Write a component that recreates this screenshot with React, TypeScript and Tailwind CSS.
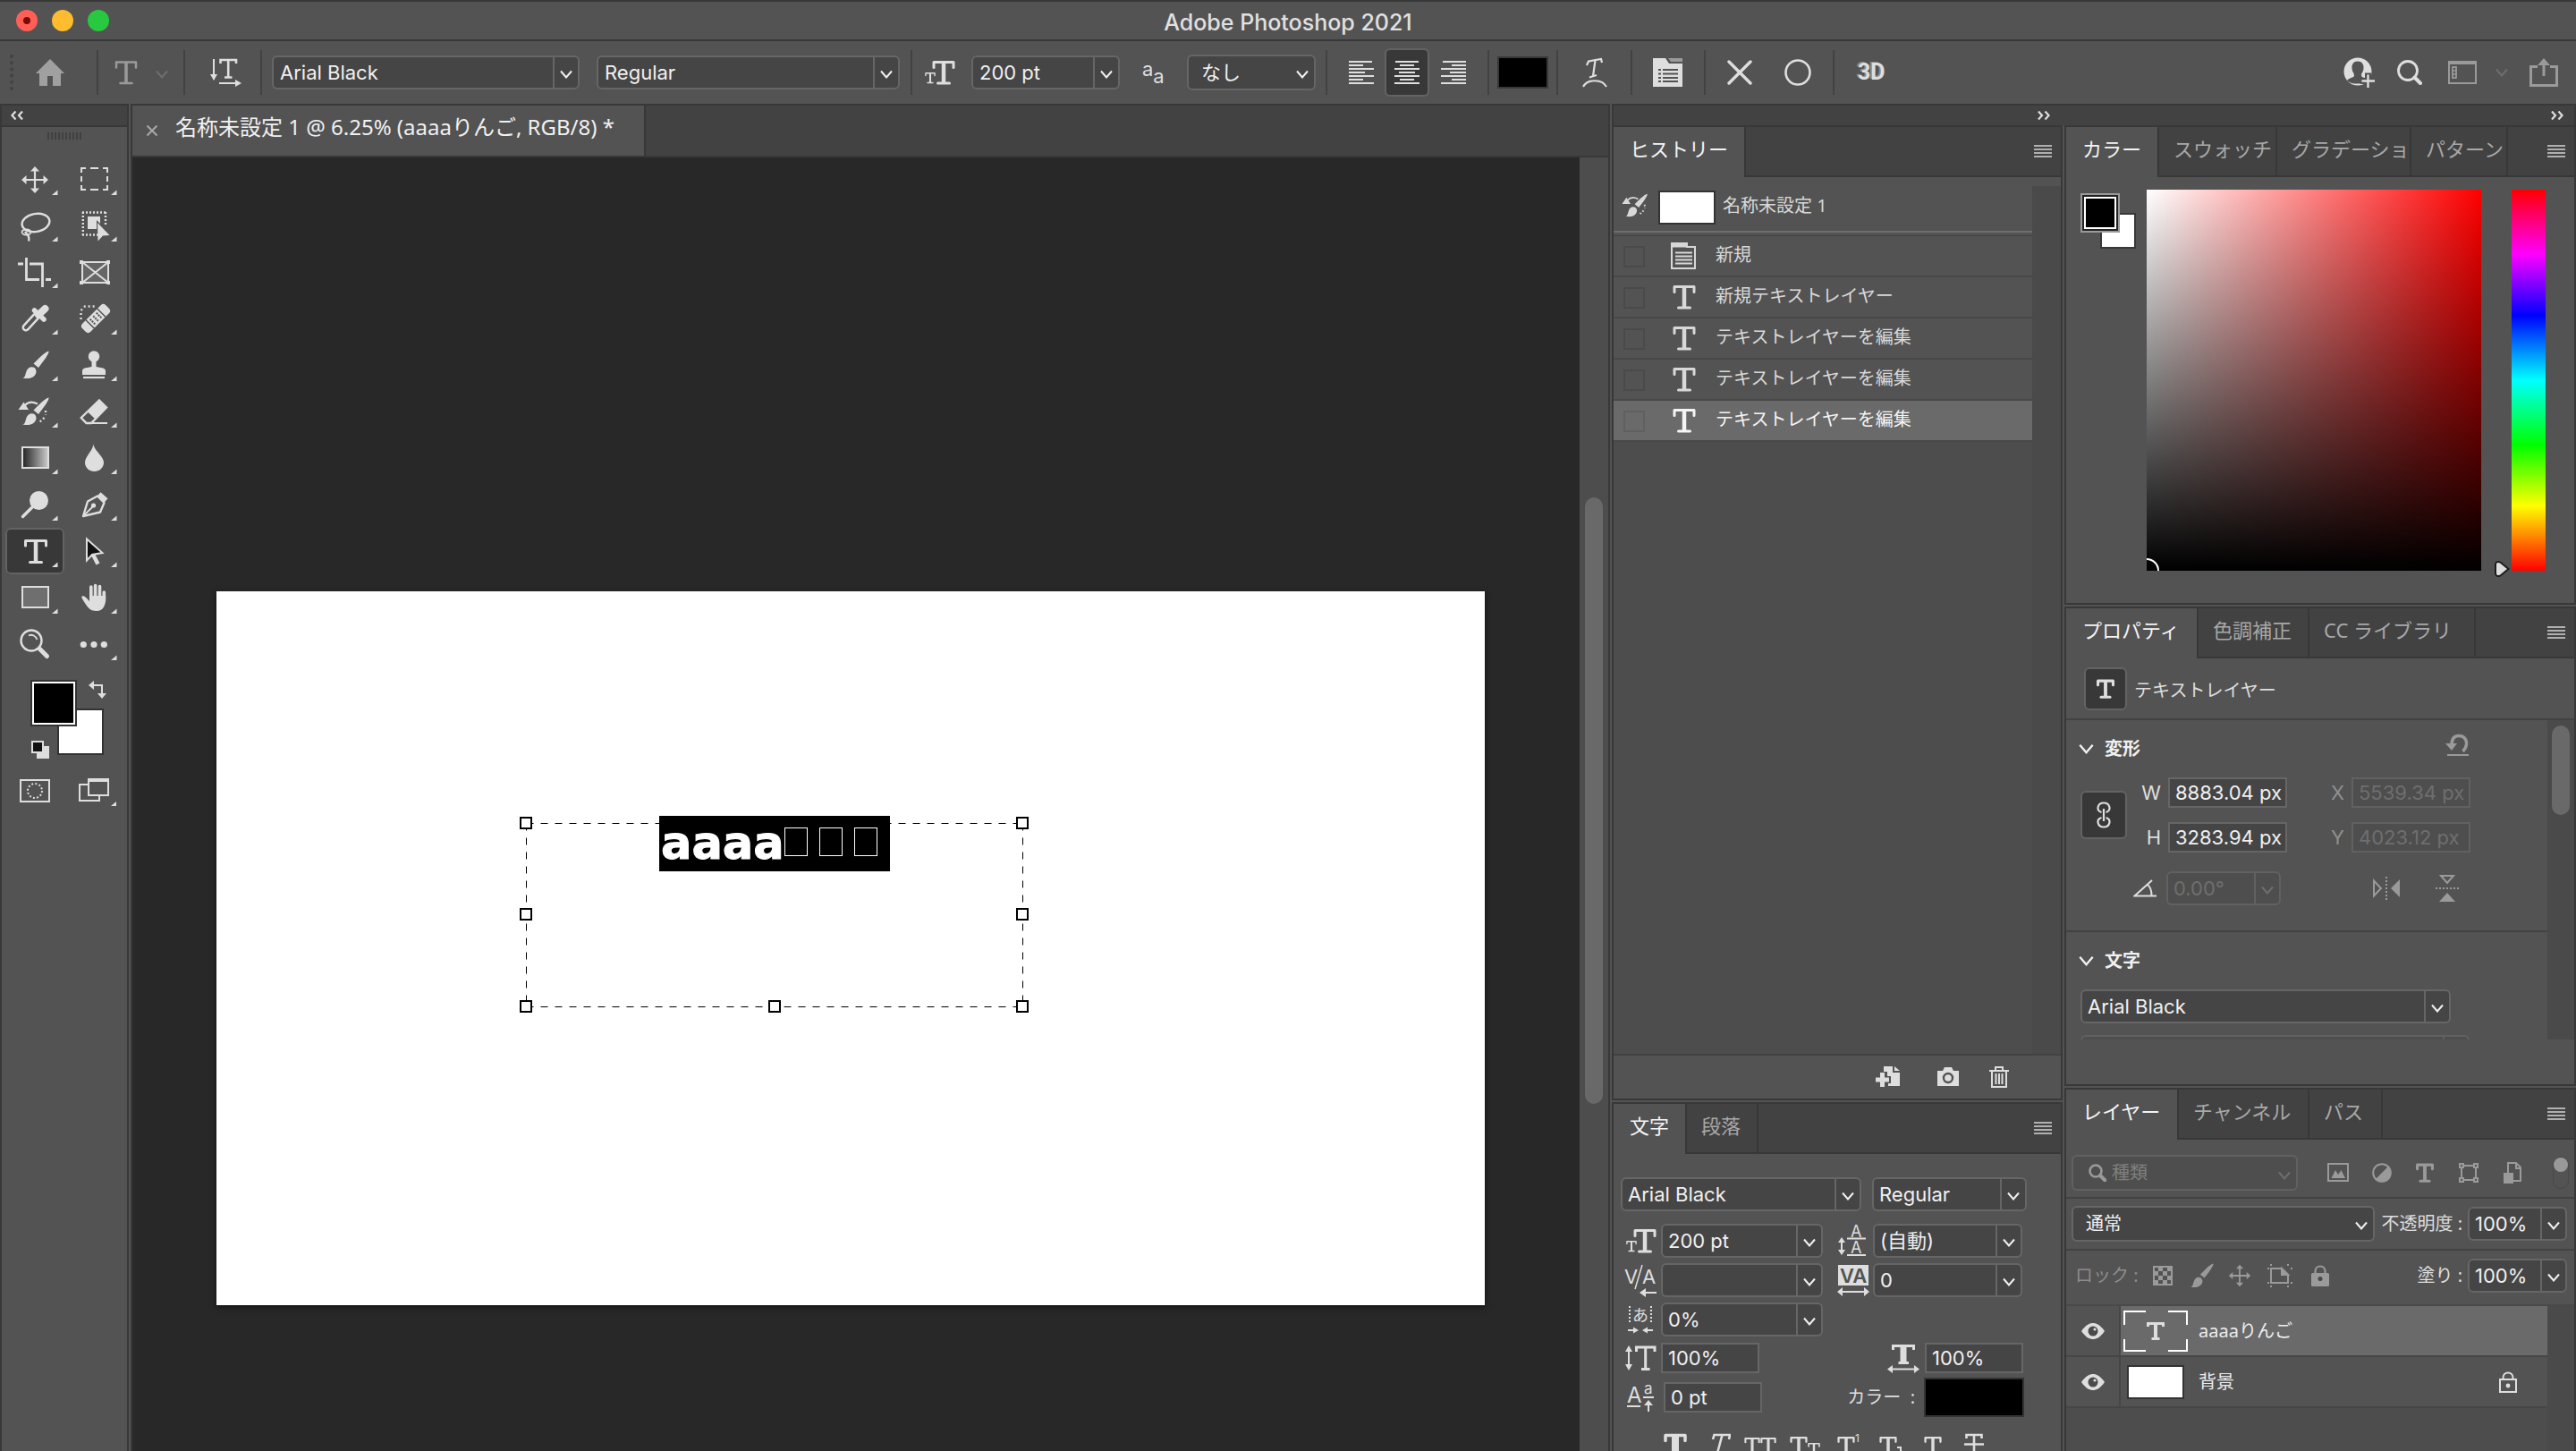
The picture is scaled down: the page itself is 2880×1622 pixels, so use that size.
import React from "react";

const UI = "font-['Inter','Noto_Sans_CJK_JP',sans-serif]";
const JP = "font-['Noto_Sans','Noto_Sans_CJK_JP',sans-serif]";

/* ---------- shared controls ---------- */

function Chevron({ className = "", size = "h-[10px] w-[14px]" }: { className?: string; size?: string }) {
  return (
    <svg viewBox="0 0 14 10" className={`shrink-0 ${size} ${className}`} fill="none" stroke="currentColor" strokeWidth="2">
      <path d="M1 1.500 7 8.500 13 1.500" />
    </svg>
  );
}

type ComboProps = { label: string; value: string; className?: string; split?: boolean; disabled?: boolean; pad?: string };

function Combo({ label, value, className = "", split = true, disabled = false, pad = "pl-[7px]" }: ComboProps) {
  const tone = disabled ? "border-[#616161] bg-[#4e4e4e] text-[#6e6e6e]" : "border-[#666666] bg-[#454545] text-[#f0f0f0]";
  return (
    <div className={`relative flex shrink-0 rounded-md border-2 ${tone} ${className}`}>
      <select aria-label={label} disabled={disabled} className={`h-full w-full appearance-none bg-transparent ${pad} opacity-100 outline-none`}>
        <option>{value}</option>
      </select>
      <span
        className={
          split
            ? "pointer-events-none absolute inset-y-0 right-0 flex w-7 items-center justify-center border-l-2 border-inherit pt-1"
            : "pointer-events-none absolute inset-y-0 right-0 flex w-5 items-center pt-1"
        }
      >
        <Chevron />
      </span>
    </div>
  );
}

function Field({ label, value, className = "", disabled = false }: { label: string; value: string; className?: string; disabled?: boolean }) {
  const tone = disabled ? "border-[#616161] bg-[#4e4e4e] text-[#6e6e6e]" : "border-[#666666] bg-[#454545] text-[#f0f0f0]";
  return <input aria-label={label} defaultValue={value} disabled={disabled} className={`h-[34px] shrink-0 border-2 pl-1.5 outline-none ${tone} ${className}`} />;
}

function TGlyph({ className = "", stem = 4.5, bar = 3 }: { className?: string; stem?: number; bar?: number }) {
  return (
    <svg viewBox="0 0 26 28" className={`shrink-0 ${className}`} fill="none" stroke="currentColor">
      <path d="M2 8.500V2.500H24V8.500" strokeWidth={bar} strokeLinecap="round" strokeLinejoin="round" />
      <path d="M13 2V26" strokeWidth={stem} />
      <path d="M6.500 26H19.500" strokeWidth={bar} strokeLinecap="round" />
    </svg>
  );
}

function MenuButton() {
  return (
    <button aria-label="パネルメニュー" className="ml-auto mr-2.5 flex w-5 flex-col gap-0.5 self-center pb-1 pt-1 text-[#b0b0b0]">
      <span className="h-0.5 w-full bg-current" />
      <span className="h-0.5 w-full bg-current" />
      <span className="h-0.5 w-full bg-current" />
      <span className="h-0.5 w-full bg-current" />
    </button>
  );
}

function Tabs({ items }: { items: { name: string; width: string }[] }) {
  return (
    <div role="tablist" className={`flex h-14 shrink-0 bg-[#424242] text-[22px] leading-[30px] ${JP}`}>
      {items.map((t, i) => (
        <button
          key={t.name}
          role="tab"
          aria-selected={i === 0}
          className={`shrink-0 overflow-hidden whitespace-nowrap border-r-2 border-[#383838] text-left ${t.width} ${
            i === 0 ? "bg-[#535353] pb-2 pl-[18px] text-[#f4f4f4]" : "border-b-2 pb-1.5 pl-4 text-[#a8a8a8]"
          }`}
        >
          {t.name}
        </button>
      ))}
      <div className="flex flex-1 border-b-2 border-[#383838]">
        <MenuButton />
      </div>
    </div>
  );
}

function DoubleChevron({ right = false }: { right?: boolean }) {
  return (
    <svg viewBox="0 0 14 10" className="h-[10px] w-[14px]" fill="none" stroke="currentColor" strokeWidth="2.2">
      {right ? <path d="M1 .5 5 5 1 9.500M8.500 .5 12.500 5 8.500 9.500" /> : <path d="M5.500 .5 1.500 5 5.500 9.500M13 .5 9 5 13 9.500" />}
    </svg>
  );
}

function BrushShape() {
  return (
    <g fill="currentColor" stroke="none">
      <path d="M48.500 10.500C49 12 46 17 43 21L37 29 31.500 24.500 38.500 17.500C42 14 47 10.500 48.500 10.500Z" />
      <path d="M19.500 40.500C22.500 39.500 22 37 23.500 33 25 28.500 29.500 27 32.500 29 35.500 31.500 35 36 32 38.500 28.500 41.500 23.500 41.500 19.500 40.500Z" />
    </g>
  );
}

/* ---------- title and options bars ---------- */

function TitleBar() {
  return (
    <header className="flex h-[46px] shrink-0 items-center border-y-2 border-[#383838] px-[18px]">
      <div className="flex flex-1 gap-4">
        <button aria-label="閉じる" className="flex size-6 items-center justify-center rounded-full bg-[#ff5f57]">
          <span className="size-2 rounded-full bg-[#7a0a05]" />
        </button>
        <button aria-label="しまう" className="size-6 rounded-full bg-[#febc2e]" />
        <button aria-label="拡大" className="size-6 rounded-full bg-[#28c840]" />
      </div>
      <h1 className="pt-1 text-[25px] font-medium leading-8 text-[#e0e0e0]">Adobe Photoshop 2021</h1>
      <div className="flex-1" />
    </header>
  );
}

function Sep({ className = "" }: { className?: string }) {
  return <span className={`h-[50px] w-0.5 shrink-0 bg-[#424242] ${className}`} />;
}

function AlignIcon({ kind }: { kind: "left" | "center" | "right" }) {
  const widths = [26, 20, 28, 22, 28, 20, 28, 22].map((w, i) => (i % 2 ? w - 4 : w));
  return (
    <svg viewBox="0 0 28 28" className="size-7" fill="currentColor">
      {widths.slice(0, 7).map((w, i) => (
        <rect key={i} x={kind === "left" ? 0 : kind === "center" ? (28 - w) / 2 : 28 - w} y={i * 4 + 1} width={w} height={2} />
      ))}
    </svg>
  );
}

function OptionsBar() {
  return (
    <div className="flex h-[70px] shrink-0 items-center pr-5 text-[22px] text-[#dedede]">
      <span className="ml-[11px] h-10 w-1 shrink-0 border-l-4 border-dotted border-[#424242]" />
      <button aria-label="ホーム" className="ml-[25px] text-[#a0a0a0]">
        <svg viewBox="0 0 32 30" className="h-[30px] w-8" fill="currentColor">
          <path d="M16 0 32 16H28V30H19V19H13V30H4V16H0Z" />
        </svg>
      </button>
      <Sep className="ml-9" />
      <button aria-label="横書き文字ツール" className="ml-[18px] flex items-center gap-5">
        <TGlyph className="h-7 w-[26px] text-[#9a9a9a]" stem={3.5} bar={2.5} />
        <Chevron className="mt-1 text-[#6e6e6e]" />
      </button>
      <Sep className="ml-[17px]" />
      <button aria-label="テキストの方向の切り替え" className="ml-[27px]">
        <svg viewBox="0 0 36 32" className="h-8 w-9" fill="none" stroke="currentColor">
          <path d="M5 1V24M11 28H30" strokeWidth="2" />
          <path d="M1 18 5 25 9 18ZM29 24 36 28 29 32Z" fill="currentColor" stroke="none" />
          <path d="M12.500 6V2H30V6M21.200 2V21M17 21.500H25.500" strokeWidth="2.6" />
        </svg>
      </button>
      <Sep className="ml-[21px]" />
      <Combo label="フォント" value="Arial Black" className="ml-[11px] h-[38px] w-[344px]" />
      <Combo label="フォントスタイル" value="Regular" className="ml-[19px] h-[38px] w-[339px]" />
      <Sep className="ml-3" />
      <span className="ml-3.5 flex items-end">
        <TGlyph className="h-4 w-3" stem={4.5} />
        <TGlyph className="-ml-1 h-7 w-[26px]" />
      </span>
      <Combo label="フォントサイズ" value="200 pt" className="ml-[18px] h-[38px] w-[166px]" />
      <span className="ml-[25px] flex w-7 shrink-0 items-end text-[22px] leading-6">
        <span className="pb-2">a</span>
        <span>a</span>
      </span>
      <Combo label="アンチエイリアス" value="なし" split={false} pad="pl-3.5" className="ml-[22px] h-10 w-36" />
      <Sep className="ml-[11px]" />
      <button aria-label="左揃え" className="ml-6">
        <AlignIcon kind="left" />
      </button>
      <button aria-label="中央揃え" className="ml-3 flex h-[54px] w-[50px] shrink-0 items-center justify-center rounded-md border-2 border-[#636363] bg-[#383838]">
        <AlignIcon kind="center" />
      </button>
      <button aria-label="右揃え" className="ml-[13px]">
        <AlignIcon kind="right" />
      </button>
      <Sep className="ml-6" />
      <button aria-label="テキストカラー" className="ml-[9px] h-9 w-[57px] shrink-0 border-2 border-[#383838] bg-black" />
      <Sep className="ml-[9px]" />
      <button aria-label="ワープテキスト" className="ml-[27px]">
        <svg viewBox="0 0 28 34" className="h-[34px] w-7" fill="none" stroke="currentColor" strokeWidth="2.2">
          <path d="M5 9 7 4.500 21 2 22 6M14.500 3.500 12 21M8 22.500 16 20" />
          <path d="M1 33C6 24 22 24 27 33" />
        </svg>
      </button>
      <Sep className="ml-[26px]" />
      <button aria-label="文字パネルと段落パネル" className="ml-[23px]">
        <svg viewBox="0 0 33 32" className="h-8 w-[33px]">
          <path d="M0 0H14L18 6H33V32H0Z" fill="#dedede" />
          <path d="M17 0H33V4H20Z" fill="#9a9a9a" />
          <path d="M6 13H9M11 13H28M6 17.500H9M11 17.500H28M6 22H9M11 22H28M6 26H9M11 26H28" stroke="#535353" strokeWidth="2" />
        </svg>
      </button>
      <Sep className="ml-6" />
      <button aria-label="キャンセル" className="ml-6">
        <svg viewBox="0 0 28 28" className="size-7" fill="none" stroke="currentColor" strokeWidth="3.400" strokeLinecap="round">
          <path d="M2 2 26 26M26 2 2 26" />
        </svg>
      </button>
      <button aria-label="確定" className="ml-9">
        <svg viewBox="0 0 30 30" className="size-[30px]" fill="none" stroke="currentColor" strokeWidth="2.600">
          <circle cx="15" cy="15" r="13.500" />
        </svg>
      </button>
      <Sep className="ml-6" />
      <button aria-label="3D" className="ml-[26px] text-[25px] font-bold leading-8 font-['Roboto',sans-serif] [text-shadow:-2px_-1px_0_#8a8a8a]">
        3D
      </button>
      <div className="flex-1" />
      <button aria-label="アカウント" className="mr-6">
        <svg viewBox="0 0 36 34" className="h-[34px] w-9">
          <circle cx="16" cy="16" r="15.500" fill="#dedede" />
          <path d="M16 4.500C20.500 4.500 23 8 22.500 12.500 22 17 20 17.500 20 20.500 20 23 26 23 28 26 25 30 21 29.500 16 29.500S7 29 4 26C6 23 12 23 12 20.500 12 17.500 10 17 9.500 12.500 9 8 11.500 4.500 16 4.500Z" fill="#535353" />
          <path d="M27.500 17.500V34M19 26.500H36" stroke="#535353" strokeWidth="7" />
          <path d="M27.500 19.500V34M20.500 26.500H35" stroke="#dedede" strokeWidth="2.400" />
        </svg>
      </button>
      <button aria-label="検索" className="mr-[29px]">
        <svg viewBox="0 0 28 28" className="size-7" fill="none" stroke="currentColor">
          <circle cx="12" cy="12" r="10.500" strokeWidth="2.800" />
          <path d="M19.500 19.500 26 26" strokeWidth="4" strokeLinecap="round" />
        </svg>
      </button>
      <button aria-label="ワークスペース" className="flex items-center gap-[21px] text-[#9a9a9a]">
        <svg viewBox="0 0 32 26" className="h-[26px] w-8" fill="none" stroke="currentColor" strokeWidth="2">
          <rect x="1" y="1" width="30" height="24" />
          <path d="M1 2.500H31" strokeWidth="3" />
          <rect x="5" y="7" width="4" height="12" strokeWidth="1.800" />
          <path d="M5 11H9M5 15H9" strokeWidth="1.500" />
        </svg>
        <Chevron className="text-[#6e6e6e]" />
      </button>
      <button aria-label="共有" className="ml-6 text-[#9a9a9a]">
        <svg viewBox="0 0 32 32" className="size-8" fill="none" stroke="currentColor" strokeWidth="3">
          <path d="M9 9.500H1.500V30.500H30.500V9.500H23M16 5V20" />
          <path d="M9 8 16 0 23 8Z" fill="currentColor" stroke="none" />
        </svg>
      </button>
    </div>
  );
}

/* ---------- toolbox ---------- */

const TOOLS: { name: string; flyout?: boolean; active?: boolean; art: React.ReactNode }[] = [
  {
    name: "移動ツール",
    art: (
      <>
        <path d="M33 16V38M22 27H44" strokeWidth="2.200" />
        <path d="M33 12 38 17.500H28ZM33 42 28 36.500H38ZM18 27 23.500 22V32ZM48 27 42.500 32V22Z" fill="currentColor" stroke="none" />
      </>
    ),
  },
  { name: "長方形選択ツール", art: <path d="M19 19V14H24M29 14H38M43 14H48V19M48 23V29M48 33V38H43M38 38H29M24 38H19V33M19 29V23" strokeWidth="2" /> },
  {
    name: "なげなわツール",
    art: (
      <>
        <ellipse cx="34" cy="23" rx="15.500" ry="10" transform="rotate(-10 34 23)" />
        <ellipse cx="23.500" cy="33.500" rx="5" ry="3" strokeWidth="1.800" />
        <path d="M22 33C24 36 28 38 26 43.500" />
      </>
    ),
  },
  {
    name: "オブジェクト選択ツール",
    art: (
      <>
        <path d="M20 11.500H47M20 36.500H38M20.800 11V37M46 11V26" strokeDasharray="2 2" />
        <path d="M26 16H40V24L36 20V30H26ZM37 23 50.500 37 43 37.500 37.500 43.500Z" fill="currentColor" stroke="none" />
      </>
    ),
  },
  { name: "切り抜きツール", art: <path d="M14 17H20M23.500 10V34.500H38M45 34.500H51M27 17H41.500V43" strokeWidth="2.800" /> },
  {
    name: "フレームツール",
    flyout: false,
    art: (
      <>
        <rect x="20" y="15" width="29" height="23" fill="#666666" strokeWidth="2" />
        <path d="M20 15 49 38M49 15 20 38" strokeWidth="2" />
        <path d="M17 13H21V17H17ZM47 13H51V17H47ZM17 36H21V40H17ZM47 36H51V40H47Z" fill="currentColor" stroke="none" />
      </>
    ),
  },
  {
    name: "スポイトツール",
    art: (
      <>
        <path d="M34 24 23 36" strokeWidth="9" strokeLinecap="round" />
        <path d="M35 23 23 36" strokeWidth="4" stroke="#535353" strokeLinecap="round" />
        <path d="M37 22 44.500 15" strokeWidth="8" strokeLinecap="round" />
        <path d="M32.500 17 43 27" strokeWidth="5.500" strokeLinecap="round" />
      </>
    ),
  },
  {
    name: "スポット修復ブラシツール",
    art: (
      <>
        <path d="M18.500 27V17L23 12.500H34" strokeDasharray="2 3" />
        <g transform="rotate(-45 35 26)">
          <rect x="16.500" y="19.500" width="37" height="13" rx="4" fill="currentColor" stroke="none" />
          <path d="M26 19V33M44 19V33" stroke="#535353" strokeWidth="1.500" />
          <path d="M29 23H43M29 26H43M29 29H43" stroke="#535353" strokeWidth="2" strokeDasharray="2 3" />
        </g>
      </>
    ),
  },
  { name: "ブラシツール", art: <BrushShape /> },
  {
    name: "コピースタンプツール",
    art: (
      <>
        <g fill="currentColor" stroke="none">
          <circle cx="33" cy="16.500" r="6.200" />
          <path d="M30.500 20H35.500V28C40 29 46 29 46 32.500V37H20V32.500C20 29 26 29 30.500 28Z" />
        </g>
        <path d="M21 40H45" strokeWidth="2.200" />
      </>
    ),
  },
  {
    name: "ヒストリーブラシツール",
    art: (
      <>
        <BrushShape />
        <path d="M14.500 24 20.500 15.500 26 24Z" fill="currentColor" stroke="none" />
        <path d="M22 19C26 14.500 31 15 36 17.500" strokeWidth="2" />
        <path d="M45 25V30M43.500 33 38 38" strokeDasharray="2 2.500" />
      </>
    ),
  },
  {
    name: "消しゴムツール",
    art: (
      <>
        <path d="M39 13.500 47 21.500 30 39H24.500L18.800 33Z" />
        <path d="M39 13 47.500 21.500 34 34 26 26.500Z" fill="currentColor" stroke="none" />
        <path d="M25 39H48" strokeWidth="2" />
      </>
    ),
  },
  {
    name: "グラデーションツール",
    art: (
      <>
        <defs>
          <linearGradient id="toolGradient">
            <stop offset="0" stopColor="#222" />
            <stop offset="1" stopColor="#ccc" />
          </linearGradient>
        </defs>
        <rect x="19" y="14" width="29" height="23" fill="url(#toolGradient)" strokeWidth="2" />
      </>
    ),
  },
  { name: "ぼかしツール", art: <path d="M32.300 10.500C33.500 18 44 24 44 31 44 37 39 41 33.500 41S23 37 23 31C23 24 32 18 32.300 10.500Z" fill="currentColor" stroke="none" /> },
  {
    name: "覆い焼きツール",
    art: (
      <>
        <circle cx="37.500" cy="21.500" r="10.500" fill="currentColor" stroke="none" />
        <path d="M31 28 19.500 39.500" strokeWidth="3.400" strokeLinecap="round" />
      </>
    ),
  },
  {
    name: "ペンツール",
    art: (
      <>
        <path d="M21 39 26 22.500 37 16.500 44.500 24 40 34.500Z" strokeLinejoin="round" />
        <path d="M38.500 14.500 46.500 21.500" strokeWidth="6" />
        <circle cx="32.500" cy="27" r="2.600" fill="currentColor" stroke="none" />
        <path d="M32 28 21.500 38.500" strokeWidth="1.800" />
      </>
    ),
  },
  {
    name: "文字ツール",
    active: true,
    art: (
      <>
        <path d="M22.500 20V14.500H45.500V20" strokeWidth="3" strokeLinecap="round" strokeLinejoin="round" />
        <path d="M34 14V38" strokeWidth="4.500" />
        <path d="M27.500 38.500H40.500" strokeWidth="3" strokeLinecap="round" />
      </>
    ),
  },
  {
    name: "パスコンポーネント選択ツール",
    art: (
      <>
        <path d="M32 30 37.500 40.500" strokeWidth="4.500" />
        <path d="M25 12.500V36.500L31 30 42.500 28Z" fill="#111111" strokeWidth="2" />
      </>
    ),
  },
  { name: "長方形ツール", art: <rect x="19" y="14" width="29" height="23" fill="#6f6f6f" strokeWidth="2" /> },
  {
    name: "手のひらツール",
    art: (
      <>
        <path d="M29.800 28V14M34.600 27V12.500M39.500 28V13.500M44.300 30V20" strokeWidth="3.600" strokeLinecap="round" />
        <path d="M19.500 24.500C22.500 23 25 27 28 30V24H46.200C46.500 34 44 41 36 41 28 41 26 37 19.500 26.500Z" fill="currentColor" stroke="none" />
      </>
    ),
  },
  {
    name: "ズームツール",
    flyout: false,
    art: (
      <>
        <circle cx="29" cy="22" r="11.500" />
        <path d="M26 16.500C30 14.500 34 17 35.500 21" strokeWidth="1.800" />
        <path d="M38.500 31.500 46.500 39.500" strokeWidth="5" strokeLinecap="round" />
      </>
    ),
  },
  {
    name: "ツールバーを編集",
    art: (
      <g fill="currentColor" stroke="none">
        <circle cx="21.300" cy="26.500" r="3.600" />
        <circle cx="33" cy="26.500" r="3.600" />
        <circle cx="44.300" cy="26.500" r="3.600" />
      </g>
    ),
  },
];

function Toolbox() {
  return (
    <aside className="flex w-36 shrink-0 flex-col border-2 border-b-0 border-[#383838] text-[#dedede]">
      <button aria-label="折りたたむ" className="flex h-6 shrink-0 items-center border-b-2 border-[#383838] bg-[#424242] pl-2.5">
        <DoubleChevron />
      </button>
      <div className="flex h-8 shrink-0 justify-center gap-0.5 pt-1.5">
        {Array.from({ length: 10 }, (_, i) => (
          <span key={i} className="h-2 w-0.5 bg-[#404040]" />
        ))}
      </div>
      <div className="grid grid-cols-2 px-1">
        {TOOLS.map((t) => (
          <button
            key={t.name}
            aria-label={t.name}
            className={t.active ? "h-[52px] rounded-md bg-[#383838] outline-2 -outline-offset-2 outline-[#636363]" : "h-[52px]"}
          >
            <svg viewBox="0 0 66 52" className="h-[52px] w-full" fill="none" stroke="currentColor" strokeWidth="2.400">
              {t.art}
              {t.flyout !== false && <path d="M58.500 38.500V44H52Z" fill="currentColor" stroke="none" />}
            </svg>
          </button>
        ))}
      </div>
      <svg viewBox="0 0 140 160" className="h-40 w-full shrink-0" role="img" aria-label="描画色と背景色">
        <rect x="63" y="47" width="50" height="50" fill="#fff" stroke="#333" strokeWidth="2" />
        <rect x="33" y="15" width="50" height="50" fill="#fff" stroke="#333" strokeWidth="2" />
        <rect x="36" y="18" width="44" height="44" fill="#000" />
        <path d="M101 20H112V32" fill="none" stroke="#dedede" strokeWidth="2" />
        <path d="M97 20 103 15V25ZM112 35 107 29H117Z" fill="#dedede" />
        <path d="M39 88H53V102H39Z" fill="#dedede" />
        <rect x="34" y="83" width="12" height="12" fill="#111" stroke="#dedede" strokeWidth="2" />
        <g fill="none" stroke="#dedede" strokeWidth="2">
          <rect x="21" y="126" width="32" height="24" />
          <circle cx="37" cy="138" r="8" strokeDasharray="2 2.200" />
          <path d="M96 131H87V149H109V144" />
          <rect x="97" y="125" width="22" height="18" />
        </g>
        <path d="M97 126.500H119" stroke="#dedede" strokeWidth="3" />
        <path d="M128 150V155H122Z" fill="#dedede" />
      </svg>
    </aside>
  );
}

/* ---------- document ---------- */

const HANDLES = [
  "-left-[7px] -top-[7px]",
  "-right-[7px] -top-[7px]",
  "-left-[7px] top-[95px]",
  "-right-[7px] top-[95px]",
  "-bottom-[7px] -left-[7px]",
  "-bottom-[7px] left-[271px]",
  "-bottom-[7px] -right-[7px]",
];

function DocumentArea() {
  return (
    <main className="flex min-w-0 flex-1 flex-col border-2 border-b-0 border-[#383838]">
      <div className="flex h-[58px] shrink-0 border-b-2 border-[#383838] bg-[#424242]">
        <div className={`flex w-[574px] items-center border-r-2 border-[#383838] bg-[#535353] pb-2 pl-4 text-[24px] leading-8 text-[#f0f0f0] ${JP}`}>
          <button aria-label="閉じる" className="mr-5 mt-2 text-[#a8a8a8]">
            <svg viewBox="0 0 12 12" className="size-3" fill="none" stroke="currentColor" strokeWidth="2">
              <path d="M.5 .5 11.500 11.500M11.500 .5 .5 11.500" />
            </svg>
          </button>
          <span className="whitespace-nowrap">名称未設定 1 @ 6.25% (aaaaりんご, RGB/8) *</span>
        </div>
      </div>
      <div className="flex min-h-0 flex-1">
        <div className="min-w-0 flex-1 overflow-hidden bg-[#282828] pl-[94px] pt-[485px]">
          <div className="relative h-[798px] w-[1418px] bg-white shadow-[0_2px_6px_#111]">
            <div className="absolute left-[346px] top-[259px] h-[205px] w-[555px]">
              <svg className="absolute inset-0 size-full overflow-visible" fill="none" stroke="#000" strokeWidth="1">
                <path d="M.5 .5H555.500M.5 205.500H555.500" strokeDasharray="8 8" />
                <path d="M.5 .5V205.500M555.500 .5V205.500" strokeDasharray="8 8" />
              </svg>
              {HANDLES.map((h) => (
                <span key={h} className={`absolute size-3.5 border-2 border-black bg-white ${h}`} />
              ))}
              <div className="absolute -top-2 left-[149px] flex h-[62px] w-[258px] items-center bg-black pl-0.5 text-white">
                <span className="text-[51px] font-bold leading-[54px] font-['DejaVu_Sans',sans-serif] [-webkit-text-stroke:1px_white]">aaaa</span>
                <span className="flex gap-[13px] pb-1">
                  <span className="h-8 w-[26px] border border-white" />
                  <span className="h-8 w-[26px] border border-white" />
                  <span className="h-8 w-[26px] border border-white" />
                </span>
              </div>
            </div>
          </div>
        </div>
        <div className="w-8 shrink-0 bg-[#4d4d4d] px-1.5 pt-[380px]">
          <div className="h-[678px] rounded-full bg-[#696969]" />
        </div>
      </div>
    </main>
  );
}

/* ---------- history and character panels ---------- */

const HISTORY = ["新規", "新規テキストレイヤー", "テキストレイヤーを編集", "テキストレイヤーを編集", "テキストレイヤーを編集"];

function HistoryPanel() {
  return (
    <section className="flex min-h-0 flex-1 flex-col border-2 border-[#383838] bg-[#535353]">
      <Tabs items={[{ name: "ヒストリー", width: "w-[148px]" }]} />
      <div className={`flex min-h-0 flex-1 bg-[#4d4d4d] text-[20px] leading-7 text-[#d8d8d8] ${JP}`}>
        <div className="flex-1">
          <div className="flex h-[60px] items-center bg-[#535353] pl-[9px]">
            <svg viewBox="14 10 36 33" className="mt-1 h-7 w-[30px]" fill="none" stroke="currentColor" strokeWidth="2.400">
              {TOOLS[10].art}
            </svg>
            <span className="ml-[11px] mt-2 h-[38px] w-16 border-2 border-[#333333] bg-white" />
            <span className="ml-2 pt-1">名称未設定 1</span>
          </div>
          <div className="h-1.5 border-b border-t-2 border-b-[#424242] border-t-[#6e6e6e] bg-[#535353]" />
          <ul>
            {HISTORY.map((h, i) => (
              <li
                key={i}
                className={`flex h-[46px] items-center border-b-2 border-[#484848] pl-[11px] ${i === 4 ? "bg-[#6a6a6a] text-[#f4f4f4]" : "bg-[#535353]"}`}
              >
                <input type="checkbox" aria-label={`${h} ${i + 1}`} className={`mt-0.5 size-6 appearance-none border-2 ${i === 4 ? "border-[#606060]" : "border-[#4a4a4a]"}`} />
                {i === 0 ? (
                  <svg viewBox="0 0 28 30" className="ml-[29px] h-[30px] w-7" fill="none" stroke="currentColor" strokeWidth="2">
                    <path d="M1 1H18V5H27V29H1Z" />
                    <path d="M0 3H18" strokeWidth="5" />
                    <path d="M5 11.500H24M5 15.500H24M5 19.500H24M5 23.500H24" />
                  </svg>
                ) : (
                  <TGlyph className="ml-[31px] h-7 w-[26px]" />
                )}
                <span className="ml-[22px] pb-0.5">{h}</span>
              </li>
            ))}
          </ul>
        </div>
        <div className="w-8 border-t-[10px] border-[#535353] bg-[#4a4a4a]" />
      </div>
      <div className="flex h-[50px] shrink-0 items-center justify-end border-t-2 border-[#424242] pr-[58px] text-[#dedede]">
        <button aria-label="新規ファイルを作成">
          <svg viewBox="0 0 28 24" className="h-6 w-7" fill="currentColor">
            <path d="M9 0H19V7H27V22H14V19H17V11H13V6H9Z" />
            <path d="M21 0 27 5H21ZM5 7H10V12.500H15V17.500H10V23H5V17.500H0V12.500H5Z" />
          </svg>
        </button>
        <button aria-label="新規スナップショットを作成" className="ml-10">
          <svg viewBox="0 0 26 22" className="h-[22px] w-[26px]">
            <path d="M1 4H7L9 0H17L19 4H25V21H1Z" fill="currentColor" />
            <circle cx="13" cy="12" r="5" fill="none" stroke="#535353" strokeWidth="2.400" />
          </svg>
        </button>
        <button aria-label="削除" className="ml-[33px]">
          <svg viewBox="0 0 22 24" className="h-6 w-[22px]" fill="none" stroke="currentColor" strokeWidth="2">
            <path d="M0 5H22M7 5V1H15V5M3 5V23H19V5M7.500 8V20M11 8V20M14.500 8V20" />
          </svg>
        </button>
      </div>
    </section>
  );
}

function IconText({ children, x, y, size, weight, fill = "currentColor" }: { children: string; x: number; y: number; size: number; weight?: number; fill?: string }) {
  return (
    <text x={x} y={y} fontSize={size} fontWeight={weight} fill={fill} stroke="none" fontFamily="Inter, 'Noto Sans CJK JP', sans-serif">
      {children}
    </text>
  );
}

function CharacterPanel() {
  const cell = "flex w-[45px] shrink-0 items-center";
  return (
    <section className="flex h-[390px] shrink-0 flex-col overflow-hidden border-2 border-b-0 border-[#383838] bg-[#535353] text-[22px] text-[#dedede]">
      <Tabs
        items={[
          { name: "文字", width: "w-[82px]" },
          { name: "段落", width: "w-20" },
        ]}
      />
      <div className="pl-2 pt-[26px]">
        <div className="flex gap-3">
          <Combo label="フォント" value="Arial Black" className="h-[38px] w-[269px]" pad="pl-1.5" />
          <Combo label="フォントスタイル" value="Regular" className="h-[38px] w-[173px]" pad="pl-1.5" />
        </div>
        <div className="mt-3.5 flex items-center">
          <span className={`${cell} items-end pl-1.5`}>
            <TGlyph className="h-4 w-3" stem={4.5} />
            <TGlyph className="-ml-1 h-7 w-[26px]" />
          </span>
          <Combo label="フォントサイズ" value="200 pt" className="h-[38px] w-[181px]" pad="pl-1.5" />
          <svg viewBox="0 0 32 36" className="ml-[17px] mr-[7px] h-9 w-8 overflow-visible" fill="none" stroke="currentColor" strokeWidth="2">
            <path d="M4 17V31M10 15.500H31M10 34H31" />
            <path d="M0 20 4 14 8 20ZM0 28 4 34 8 28Z" fill="currentColor" stroke="none" />
            <IconText x={14} y={13.500} size={18}>A</IconText>
            <IconText x={14} y={32} size={18}>A</IconText>
          </svg>
          <Combo label="行送り" value="(自動)" className="h-[38px] w-[167px]" pad="pl-1.5" />
        </div>
        <div className="mt-1.5 flex items-center">
          <svg viewBox="0 0 36 36" className="ml-1 mr-[5px] size-9 overflow-visible" fill="none" stroke="currentColor" strokeWidth="2">
            <IconText x={0} y={22} size={22}>V</IconText>
            <IconText x={20} y={22} size={22}>A</IconText>
            <path d="M20 1 12 28" strokeWidth="1.500" />
            <path d="M22 32H36" />
            <path d="M17 32 24 27V37Z" fill="currentColor" stroke="none" />
          </svg>
          <Combo label="カーニング" value="" className="h-[38px] w-[181px]" pad="pl-1.5" />
          <svg viewBox="0 0 36 36" className="ml-4 mr-1 size-9 overflow-visible" fill="none" stroke="currentColor" strokeWidth="2">
            <path d="M1 1H35V24H1Z" fill="currentColor" stroke="none" />
            <IconText x={3} y={21} size={22} weight={600} fill="#535353">VA</IconText>
            <path d="M4 31H32" />
            <path d="M0 31 6 26V36ZM36 31 30 26V36Z" fill="currentColor" stroke="none" />
          </svg>
          <Combo label="トラッキング" value="0" className="h-[38px] w-[167px]" pad="pl-1.5" />
        </div>
        <div className="mt-1.5 flex items-center">
          <svg viewBox="0 0 28 32" className="ml-2 mr-[9px] h-8 w-7 overflow-visible" fill="none" stroke="currentColor" strokeWidth="2">
            <IconText x={5} y={18} size={18}>あ</IconText>
            <path d="M2 1V21M26 1V21" strokeDasharray="2 2" />
            <path d="M0 28H8M20 28H28" />
            <path d="M6 24.500 12 28 6 31.500ZM22 24.500 16 28 22 31.500Z" fill="currentColor" stroke="none" />
          </svg>
          <Combo label="文字ツメ" value="0%" className="h-[38px] w-[181px]" pad="pl-1.5" />
        </div>
        <div className="mt-[7px] flex w-[450px] items-center">
          <span className={`${cell} pl-1`}>
            <svg viewBox="0 0 36 28" className="h-7 w-9" fill="none" stroke="currentColor" strokeWidth="2">
              <path d="M5 4V24" />
              <path d="M1 7 5 0 9 7ZM1 21 5 28 9 21Z" fill="currentColor" stroke="none" />
              <path d="M13.500 7V2H34V7M23.700 2V26M19 26.500H28.500" strokeWidth="3" />
            </svg>
          </span>
          <Field label="垂直比率" value="100%" className="w-[110px]" />
          <svg viewBox="0 0 36 34" className="ml-auto mr-1.5 h-[34px] w-9" fill="none" stroke="currentColor" strokeWidth="2">
            <path d="M6.500 8V3.500H29.500V8M12.500 22.500H24" strokeWidth="3" />
            <path d="M18 3V23" strokeWidth="7" />
            <path d="M4 29.500H32" />
            <path d="M0 29.500 6 25V34ZM36 29.500 30 25V34Z" fill="currentColor" stroke="none" />
          </svg>
          <Field label="水平比率" value="100%" className="w-[110px]" />
        </div>
        <div className="mt-[5px] flex h-11 w-[451px] items-center">
          <svg viewBox="0 0 32 32" className="ml-1.5 mr-2.5 size-8 overflow-visible" fill="none" stroke="currentColor" strokeWidth="2">
            <IconText x={1} y={22} size={24}>A</IconText>
            <IconText x={20} y={12} size={17}>a</IconText>
            <path d="M1 26H16M19 16H31M25 32V22" />
            <path d="M20 25 25 19 30 25Z" fill="currentColor" stroke="none" />
          </svg>
          <Field label="ベースラインシフト" value="0 pt" className="w-[110px]" />
          <span className={`ml-auto mr-2.5 text-[20px] ${JP}`}>カラー&nbsp; :</span>
          <button aria-label="カラー" className="h-11 w-28 border-2 border-[#333333] bg-black" />
        </div>
        <div className="ml-12 mt-[18px] grid grid-cols-[51px_39px_51px_53px_47px_50px_45px_24px] justify-items-start">
          <button aria-label="太字">
            <TGlyph className="h-7 w-[26px]" stem={8} bar={3.5} />
          </button>
          <button aria-label="斜体">
            <svg viewBox="0 0 24 28" className="h-7 w-6" fill="none" stroke="currentColor" strokeWidth="2.600">
              <path d="M4 7 5.500 2H23L22 7M14.500 2 8 26M4 26H12" />
            </svg>
          </button>
          <button aria-label="オールキャップス" className="flex">
            <TGlyph className="h-7 w-[18px]" />
            <TGlyph className="h-7 w-[18px]" />
          </button>
          <button aria-label="スモールキャップス" className="flex items-end">
            <TGlyph className="h-7 w-5" />
            <TGlyph className="h-5 w-3.5" />
          </button>
          <button aria-label="上付き文字" className="flex items-start">
            <TGlyph className="h-7 w-5" />
            <span className="text-[12px] leading-3">1</span>
          </button>
          <button aria-label="下付き文字" className="flex items-end">
            <TGlyph className="h-7 w-5" />
            <svg viewBox="0 0 6 10" className="mb-1 h-2.5 w-1.5" fill="none" stroke="currentColor" strokeWidth="2">
              <path d="M0 2H4V10" />
            </svg>
          </button>
          <button aria-label="下線">
            <TGlyph className="h-7 w-5" />
          </button>
          <button aria-label="打ち消し線">
            <svg viewBox="0 0 22 28" className="h-7 w-[22px]" fill="none" stroke="currentColor" strokeWidth="2.600">
              <path d="M2.500 6V2H19.500V6M11 2V26M0 12.500H22M7 26H15" />
            </svg>
          </button>
        </div>
      </div>
    </section>
  );
}

/* ---------- color, properties and layers panels ---------- */

function ColorPanel() {
  return (
    <section className="flex h-[536px] shrink-0 flex-col border-2 border-[#383838] bg-[#535353]">
      <Tabs
        items={[
          { name: "カラー", width: "w-[104px]" },
          { name: "スウォッチ", width: "w-[132px]" },
          { name: "グラデーション", width: "w-[150px]" },
          { name: "パターン", width: "w-[108px]" },
        ]}
      />
      <div className="flex pl-4 pr-8 pt-3.5">
        <div className="relative h-[70px] w-[62px] shrink-0">
          <button aria-label="背景色" className="absolute bottom-1 right-0 size-10 border-2 border-[#383838] bg-white" />
          <button aria-label="描画色" className="absolute left-0 top-1 size-11 border-2 border-[#9a9a9a] bg-[#222222] p-0.5">
            <span className="block size-full border-2 border-white bg-black" />
          </button>
        </div>
        <div className="relative ml-3 h-[426px] w-[374px] shrink-0 overflow-hidden bg-[linear-gradient(to_top,#000,transparent),linear-gradient(to_right,#fff,#f00)]">
          <span className="absolute -bottom-3.5 -left-3.5 size-7 rounded-full border-2 border-white" />
        </div>
        <div className="relative ml-auto h-[426px] w-[38px] shrink-0 bg-[linear-gradient(to_bottom,#f00,#f0f_17%,#00f_33%,#0ff_50%,#0f0_67%,#ff0_83%,#f00)]">
          <svg viewBox="0 0 18 20" className="absolute -bottom-2 -left-5 h-5 w-[18px]" fill="#dedede" stroke="#1c1c1c" strokeWidth="2">
            <path d="M2 5C2 2 5 1 8 3L16.500 10 8 17C5 19 2 18 2 15Z" />
          </svg>
        </div>
      </div>
    </section>
  );
}

function SectionHead({ title, children }: { title: string; children?: React.ReactNode }) {
  return (
    <div className="flex h-16 items-center pl-3.5 pr-[88px]">
      <button className={`flex items-center gap-3 text-[20px] font-bold leading-7 text-[#f0f0f0] ${JP}`}>
        <Chevron size="h-3 w-[17px]" />
        {title}
      </button>
      <span className="mb-2 ml-auto">{children}</span>
    </div>
  );
}

function PropertiesPanel() {
  return (
    <section className="flex h-[536px] shrink-0 flex-col border-2 border-[#383838] bg-[#535353] text-[22px] text-[#dedede]">
      <Tabs
        items={[
          { name: "プロパティ", width: "w-[148px]" },
          { name: "色調補正", width: "w-[124px]" },
          { name: "CC ライブラリ", width: "w-[186px]" },
        ]}
      />
      <div className={`flex h-[69px] shrink-0 items-center gap-2 border-b-2 border-[#424242] pl-5 text-[20px] leading-7 ${JP}`}>
        <span className="flex size-12 items-center justify-center rounded-md border-2 border-[#636363] bg-[#383838]">
          <TGlyph className="h-[22px] w-5" stem={5} bar={4} />
        </span>
        <span className="pt-1">テキストレイヤー</span>
      </div>
      <div className="flex h-[357px] shrink-0 overflow-hidden">
        <div className="flex-1">
          <SectionHead title="変形">
            <svg viewBox="0 0 26 26" className="h-[26px] w-[26px] text-[#9a9a9a]" fill="none" stroke="currentColor" strokeWidth="3.400">
              <path d="M7 13C7 6 10 2.500 15 2.500 21 2.500 24 7 23.500 12 23 16 22 17.500 19.500 20" />
              <path d="M0 11H13L7 19Z" fill="currentColor" stroke="none" />
              <path d="M2 24H26" strokeWidth="2" />
            </svg>
          </SectionHead>
          <div className="flex items-center pl-4">
            <button aria-label="縦横比を固定" className="flex h-[54px] w-[52px] items-center justify-center rounded-md border-2 border-[#636363] bg-[#383838]">
              <svg viewBox="0 0 16 30" className="h-[30px] w-4" fill="none" stroke="currentColor" strokeWidth="2.200">
                <path d="M5.500 12C-1 10 1 1.500 8 1.500S17 10 10.500 12M5.500 18C-1 20 1 28.500 8 28.500S17 20 10.500 18M8 8V22" />
              </svg>
            </button>
            <div className="grid grid-cols-[46px_133px_72px_133px] items-center gap-y-4">
              <label className="pr-2 text-right">W</label>
              <Field label="W" value="8883.04 px" className="w-full" />
              <label className="pr-2 text-right text-[#909090]">X</label>
              <Field label="X" value="5539.34 px" disabled className="w-full" />
              <label className="pr-2 text-right">H</label>
              <Field label="H" value="3283.94 px" className="w-full" />
              <label className="pr-2 text-right text-[#909090]">Y</label>
              <Field label="Y" value="4023.12 px" disabled className="w-full" />
            </div>
          </div>
          <div className="flex items-center border-b-2 border-[#424242] pb-7 pl-[75px] pt-[21px]">
            <svg viewBox="0 0 26 20" className="h-5 w-[26px]" fill="none" stroke="currentColor" strokeWidth="2">
              <path d="M21 1 1.500 18.500H26M16 6C20 9 20.500 14 20.500 18" />
            </svg>
            <Combo label="角度" value="0.00°" disabled className="ml-[11px] h-[38px] w-32" pad="pl-1.5" />
            <button aria-label="左右に反転" className="ml-[103px] text-[#9a9a9a]">
              <svg viewBox="0 0 30 30" className="size-[30px]" fill="none" stroke="currentColor" strokeWidth="2">
                <path d="M1 6.500V23.500L9 15Z" />
                <path d="M15 2V30" strokeDasharray="2 2" />
                <path d="M30 5V25L20 15Z" fill="currentColor" stroke="none" />
              </svg>
            </button>
            <button aria-label="上下に反転" className="ml-10 text-[#9a9a9a]">
              <svg viewBox="0 0 26 30" className="h-[30px] w-[26px]" fill="none" stroke="currentColor" strokeWidth="2">
                <path d="M6 1H20L13 9Z" />
                <path d="M0 15H26" strokeDasharray="2 2" />
                <path d="M4 30H22L13 20Z" fill="currentColor" stroke="none" />
              </svg>
            </button>
          </div>
          <SectionHead title="文字" />
          <Combo label="フォント" value="Arial Black" className="ml-4 h-[38px] w-[414px]" pad="pl-1.5" />
          <Combo label="フォントスタイル" value="" disabled className="ml-4 mt-[13px] h-[38px] w-[435px]" />
        </div>
        <div className="w-[30px] bg-[#4a4a4a] px-[5px] pt-1.5">
          <div className="h-[100px] rounded-full bg-[#696969]" />
        </div>
      </div>
    </section>
  );
}

function Eye() {
  return (
    <svg viewBox="0 0 26 18" className="h-[18px] w-[26px]">
      <path d="M0 9C5 2 9 0 13 0S21 2 26 9C21 16 17 18 13 18S5 16 0 9Z" fill="#dedede" />
      <circle cx="13" cy="9" r="5.500" fill="#4a4a4a" />
      <circle cx="15" cy="7" r="1.600" fill="#dedede" />
    </svg>
  );
}

function LayersPanel() {
  return (
    <section className="flex min-h-0 flex-1 flex-col overflow-hidden border-2 border-b-0 border-[#383838] bg-[#535353] text-[22px] text-[#dedede]">
      <Tabs
        items={[
          { name: "レイヤー", width: "w-[126px]" },
          { name: "チャンネル", width: "w-[146px]" },
          { name: "パス", width: "w-[82px]" },
        ]}
      />
      <div className="flex h-[66px] shrink-0 items-center border-b-2 border-[#424242] pl-1.5 pr-1.5 pt-[9px] text-[#9a9a9a]">
        <div className="relative flex h-10 w-[253px] items-center rounded-md border-2 border-[#616161] bg-[#4e4e4e] pl-[17px]">
          <svg viewBox="0 0 20 20" className="size-5" fill="none" stroke="currentColor">
            <circle cx="8" cy="8" r="6.500" strokeWidth="2.600" />
            <path d="M13 13 18.500 18.500" strokeWidth="4" strokeLinecap="round" />
          </svg>
          <select aria-label="フィルターの種類" className={`h-full flex-1 appearance-none pl-1.5 text-[20px] text-[#808080] outline-none ${JP}`}>
            <option>種類</option>
          </select>
          <Chevron className="pointer-events-none absolute right-1.5 top-4 text-[#6e6e6e]" />
        </div>
        <div className="flex flex-1 items-center pl-8">
          <button aria-label="ピクセルレイヤー">
            <svg viewBox="0 0 26 22" className="h-[22px] w-[26px]" fill="none" stroke="currentColor" strokeWidth="2">
              <rect x="2" y="1" width="22" height="19" />
              <path d="M5.500 17 10 8 13 13 16.500 8 21 17Z" fill="currentColor" stroke="none" />
            </svg>
          </button>
          <button aria-label="調整レイヤー" className="ml-[25px]">
            <svg viewBox="0 0 22 22" className="size-[22px]" fill="none" stroke="currentColor" strokeWidth="2">
              <circle cx="11" cy="11" r="9.800" />
              <path d="M18 4A9.800 9.800 0 0 1 4 18Z" fill="currentColor" stroke="none" />
            </svg>
          </button>
          <button aria-label="テキストレイヤー" className="ml-[27px]">
            <TGlyph className="h-[22px] w-5" stem={5} bar={4} />
          </button>
          <button aria-label="シェイプレイヤー" className="ml-[27px]">
            <svg viewBox="0 0 24 24" className="size-6" fill="none" stroke="currentColor" strokeWidth="2">
              <path d="M6 4H18M6 20H18M4 6V18M20 6V18" />
              <path d="M2 2H6V6H2ZM18 2H22V6H18ZM2 18H6V22H2ZM18 18H22V22H18Z" />
            </svg>
          </button>
          <button aria-label="スマートオブジェクト" className="ml-[26px]">
            <svg viewBox="0 0 22 24" className="h-6 w-[22px]" fill="none" stroke="currentColor" strokeWidth="2">
              <path d="M6 12V1H15L20 6V21H12M15 1V7H20" />
              <path d="M1 12H12V24H1Z" fill="currentColor" stroke="none" />
            </svg>
          </button>
          <button aria-label="フィルターのオン/オフ" className="ml-auto flex h-9 w-[18px] items-start justify-center rounded-full border border-[#494949]">
            <span className="block size-4 rounded-full bg-[#999999]" />
          </button>
        </div>
      </div>
      <div className={`flex h-[58px] shrink-0 items-center border-b-2 border-[#424242] pl-1.5 pr-2 text-[20px] ${JP}`}>
        <Combo label="描画モード" value="通常" split={false} pad="pl-3.5" className="h-10 w-[339px]" />
        <label className="ml-auto mr-1.5 whitespace-nowrap">不透明度 :</label>
        <Combo label="不透明度" value="100%" pad="pl-1.5" className={`h-[38px] w-[111px] text-[22px] ${UI}`} />
      </div>
      <div className={`flex h-[62px] shrink-0 items-center border-b-2 border-[#494949] pb-1 pl-2.5 pr-2 text-[20px] text-[#8c8c8c] ${JP}`}>
        <span className="whitespace-nowrap">ロック :</span>
        <div className="ml-4 flex items-center text-[#9a9a9a]">
          <button aria-label="透明ピクセルをロック">
            <svg viewBox="0 0 22 22" className="size-[22px]">
              <path d="M1 1H21V21H1Z" fill="none" stroke="currentColor" strokeWidth="2" />
              <path d="M6 1H11V6H6ZM16 1H21V6H16ZM1 6H6V11H1ZM11 6H16V11H11ZM6 11H11V16H6ZM16 11H21V16H16ZM1 16H6V21H1ZM11 16H16V21H11Z" fill="currentColor" />
            </svg>
          </button>
          <button aria-label="画像ピクセルをロック" className="ml-5">
            <svg viewBox="19 10 30 32" className="h-7 w-[26px]">
              <BrushShape />
            </svg>
          </button>
          <button aria-label="位置をロック" className="ml-4">
            <svg viewBox="17 11 32 32" className="size-[26px]" fill="none" stroke="currentColor">
              {TOOLS[0].art}
            </svg>
          </button>
          <button aria-label="アートボードへの自動ネストを防ぐ" className="ml-[17px]">
            <svg viewBox="0 0 30 26" className="h-[26px] w-[30px]" fill="none" stroke="currentColor" strokeWidth="2">
              <path d="M5 5H17L24 12V21H5Z" />
              <path d="M17 5V12H24Z" fill="currentColor" />
              <path d="M5 0V2M24 0V2M5 24V26M24 24V26M1 5H3M27 5H29M1 21H3M27 21H29" />
            </svg>
          </button>
          <button aria-label="すべてをロック" className="ml-[19px]">
            <svg viewBox="0 0 22 24" className="h-6 w-[22px]">
              <path d="M5.500 9V7C5.500 3.500 8 1.500 11 1.500S16.500 3.500 16.500 7V9" fill="none" stroke="currentColor" strokeWidth="2.200" />
              <rect x="1" y="9" width="20" height="15" rx="1.500" fill="currentColor" />
              <circle cx="11" cy="15.500" r="2.500" fill="#484848" />
            </svg>
          </button>
        </div>
        <label className="ml-auto mr-1.5 whitespace-nowrap text-[#dedede]">塗り :</label>
        <Combo label="塗り" value="100%" pad="pl-1.5" className={`h-[38px] w-[111px] text-[22px] ${UI}`} />
      </div>
      <div className={`flex min-h-0 flex-1 bg-[#4d4d4d] text-[20px] leading-7 text-[#ececec] ${JP}`}>
        <ul className="flex-1">
          <li className="flex h-[57px] border-b-2 border-[#464646] bg-[#6a6a6a]">
            <button aria-label="表示/非表示" className="flex w-[61px] items-center justify-center border-r-2 border-[#464646] bg-[#535353]">
              <Eye />
            </button>
            <svg viewBox="0 0 72 46" className="ml-[3px] mt-[5px] h-[46px] w-[72px]" fill="none" stroke="#fff" strokeWidth="2">
              <path d="M1 16V1H25M50 1H71V16M71 32V45H50M25 45H1V32" />
              <g stroke="#dedede" strokeWidth="3">
                <path d="M27.500 18V14.500H44.500V18M31.500 31.500H40.500" />
                <path d="M36 14V32" strokeWidth="4" />
              </g>
            </svg>
            <span className="ml-3 self-center">aaaaりんご</span>
          </li>
          <li className="flex h-[57px] items-center border-b-2 border-[#464646] bg-[#535353]">
            <button aria-label="表示/非表示" className="flex h-full w-[61px] items-center justify-center border-r-2 border-[#464646]">
              <Eye />
            </button>
            <span className="ml-[7px] h-[38px] w-16 border-2 border-[#333333] bg-white" />
            <span className="ml-4">背景</span>
            <svg viewBox="0 0 22 24" className="ml-auto mr-[33px] h-6 w-[22px]" fill="none" stroke="#dedede" strokeWidth="2">
              <path d="M5.500 9V7C5.500 3.500 8 1.500 11 1.500S16.500 3.500 16.500 7V9" />
              <rect x="2" y="9" width="18" height="14" />
              <circle cx="11" cy="16" r="2.400" fill="#dedede" stroke="none" />
            </svg>
          </li>
        </ul>
        <div className="w-[30px] bg-[#4a4a4a]" />
      </div>
    </section>
  );
}

export default function App() {
  return (
    <div className={`flex h-screen flex-col overflow-hidden bg-[#535353] text-[22px] ${UI}`}>
      <TitleBar />
      <OptionsBar />
      <div className="flex min-h-0 flex-1 gap-0.5">
        <Toolbox />
        <DocumentArea />
        <div className="flex shrink-0 flex-col">
          <div className="flex h-6 shrink-0 items-center border-2 border-b-0 border-[#383838] bg-[#424242] text-[#dedede]">
            <button aria-label="パネルを折りたたむ" className="flex w-[500px] justify-end pr-3">
              <DoubleChevron right />
            </button>
            <button aria-label="パネルを折りたたむ" className="ml-auto pr-3">
              <DoubleChevron right />
            </button>
          </div>
          <div className="flex min-h-0 flex-1 gap-0.5">
            <div className="flex w-[504px] flex-col gap-0.5">
              <HistoryPanel />
              <CharacterPanel />
            </div>
            <div className="flex w-[572px] flex-col gap-0.5">
              <ColorPanel />
              <PropertiesPanel />
              <LayersPanel />
            </div>
          </div>
        </div>
      </div>
    </div>
  );
}
